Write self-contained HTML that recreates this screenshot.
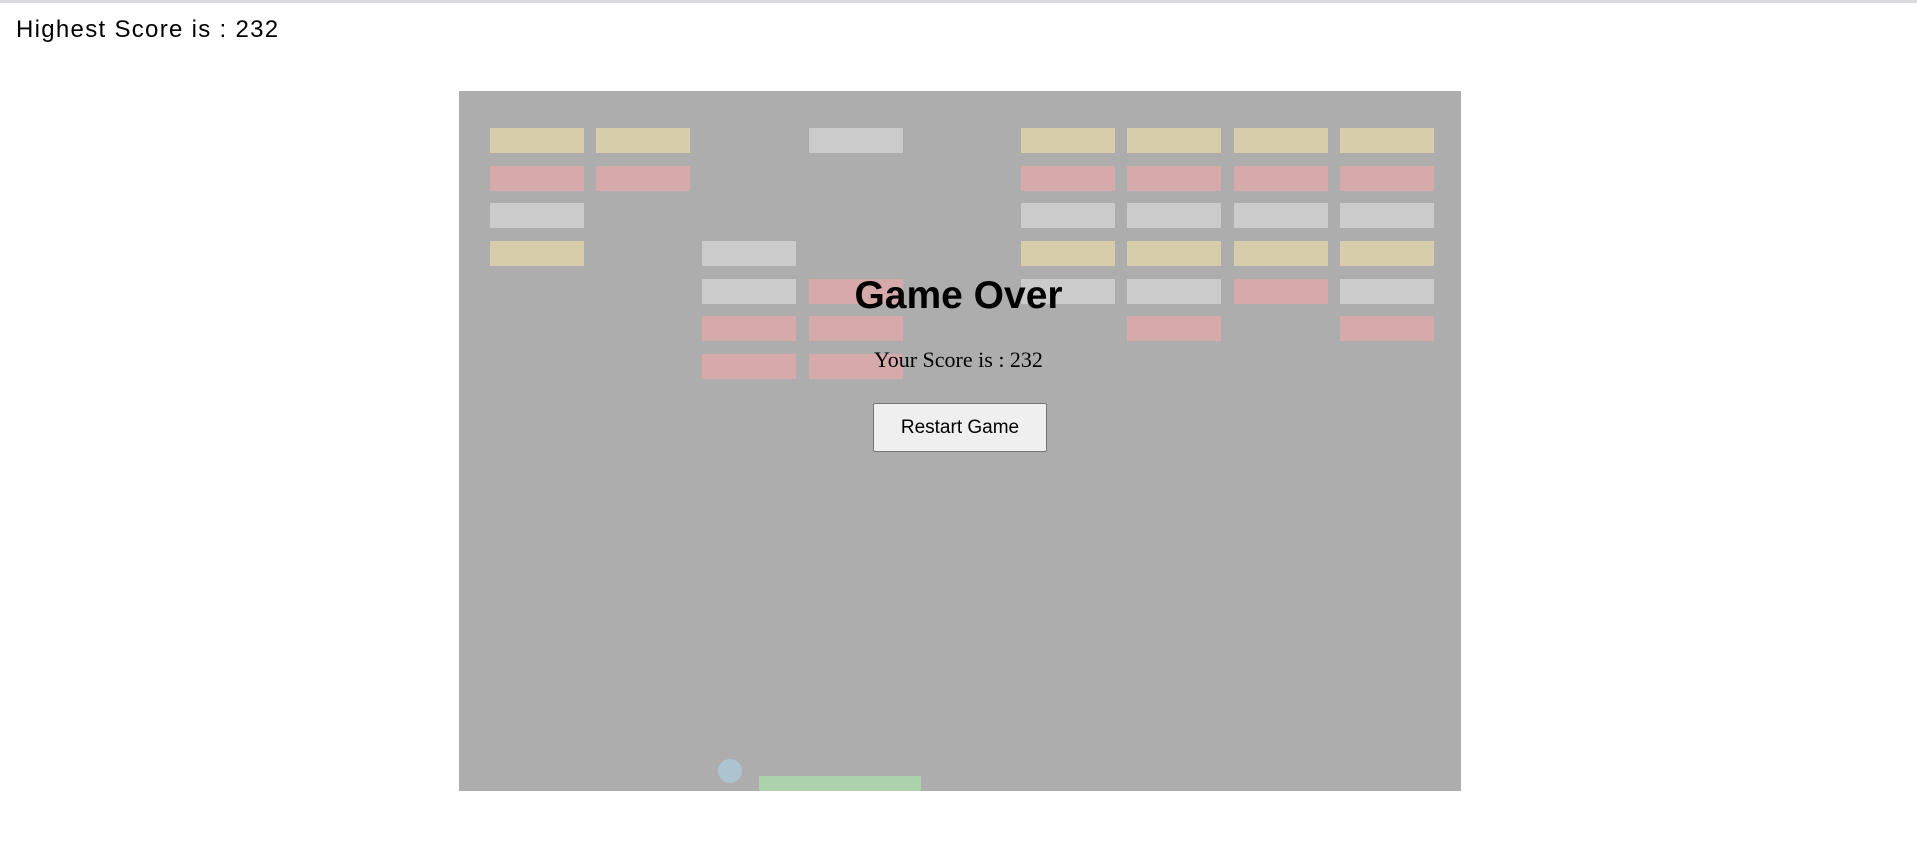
<!DOCTYPE html>
<html><head><meta charset="utf-8"><style>
html,body{margin:0;padding:0;width:1917px;height:861px;background:#fff;overflow:hidden;position:relative;font-family:"Liberation Sans",sans-serif}
#bar{position:absolute;left:0;top:0;width:1917px;height:3px;background:#dadce0}
#hs{position:absolute;left:16px;top:16px;font-size:24px;color:#000;letter-spacing:1.3px}
#cv{position:absolute;left:459px;top:91px;width:1002px;height:700px;background:#adadad}
.b{position:absolute;width:94px;height:25px}
.y{background:#d7cdab}.p{background:#d6aaab}.g{background:#cbcbcb}
#go{position:absolute;left:0;width:1917px;text-align:center;top:274px;font-size:39px;font-weight:bold;color:#000}
#sc{position:absolute;left:0;width:1917px;text-align:center;top:347px;font-family:"Liberation Serif",serif;font-size:22px;color:#000}
#btn{position:absolute;left:873px;top:403px;width:172px;height:47px;border:1px solid #767676;border-radius:2px;background:#efefef;font-size:19px;line-height:47px;text-align:center;color:#000}
</style></head><body>
<div id="bar"></div>
<div id="hs">Highest Score is : 232</div>
<div id="cv">
<div class="b y" style="left:31px;top:37px"></div><div class="b y" style="left:137px;top:37px"></div><div class="b g" style="left:350px;top:37px"></div><div class="b y" style="left:562px;top:37px"></div><div class="b y" style="left:668px;top:37px"></div><div class="b y" style="left:775px;top:37px"></div><div class="b y" style="left:881px;top:37px"></div>
<div class="b p" style="left:31px;top:75px"></div><div class="b p" style="left:137px;top:75px"></div><div class="b p" style="left:562px;top:75px"></div><div class="b p" style="left:668px;top:75px"></div><div class="b p" style="left:775px;top:75px"></div><div class="b p" style="left:881px;top:75px"></div>
<div class="b g" style="left:31px;top:112px"></div><div class="b g" style="left:562px;top:112px"></div><div class="b g" style="left:668px;top:112px"></div><div class="b g" style="left:775px;top:112px"></div><div class="b g" style="left:881px;top:112px"></div>
<div class="b y" style="left:31px;top:150px"></div><div class="b g" style="left:243px;top:150px"></div><div class="b y" style="left:562px;top:150px"></div><div class="b y" style="left:668px;top:150px"></div><div class="b y" style="left:775px;top:150px"></div><div class="b y" style="left:881px;top:150px"></div>
<div class="b g" style="left:243px;top:188px"></div><div class="b p" style="left:350px;top:188px"></div><div class="b g" style="left:562px;top:188px"></div><div class="b g" style="left:668px;top:188px"></div><div class="b p" style="left:775px;top:188px"></div><div class="b g" style="left:881px;top:188px"></div>
<div class="b p" style="left:243px;top:225px"></div><div class="b p" style="left:350px;top:225px"></div><div class="b p" style="left:668px;top:225px"></div><div class="b p" style="left:881px;top:225px"></div>
<div class="b p" style="left:243px;top:263px"></div><div class="b p" style="left:350px;top:263px"></div>
<div style="position:absolute;left:259px;top:668px;width:24px;height:24px;border-radius:50%;background:#abc4cf"></div>
<div style="position:absolute;left:300px;top:685px;width:162px;height:15px;background:#acd2ab"></div>
</div>
<div id="go">Game Over</div>
<div id="sc">Your Score is : 232</div>
<div id="btn">Restart Game</div>
</body></html>
